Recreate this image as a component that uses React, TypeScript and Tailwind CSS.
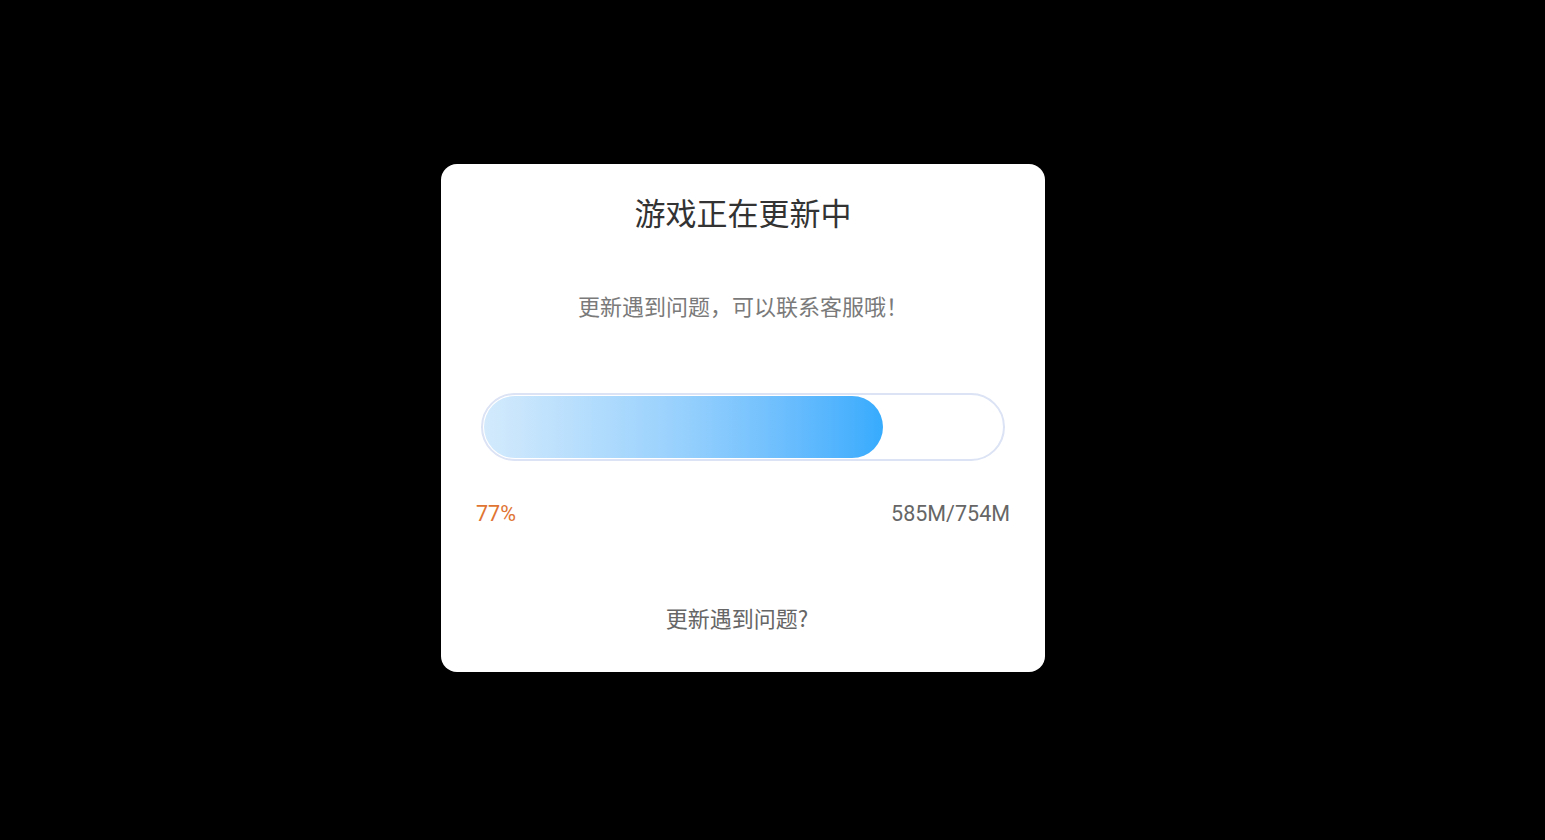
import React from 'react';

const percent = 77;

const UpdateDialog: React.FC = () => {
  return (
    <div className="w-[604px] h-[508px] bg-white rounded-2xl flex flex-col items-stretch pt-[28px] pb-[38px]">
      {/* 标题 */}
      <div className="h-[40px] leading-[40px] text-center text-[31px] text-[#333333]">
        游戏正在更新中
      </div>

      {/* 提示 */}
      <div className="mt-[58px] h-[30px] leading-[30px] text-center text-[22px] text-[#7a7a7a]">
        更新遇到问题，可以联系客服哦！
      </div>

      {/* 进度条 */}
      <div className="mt-[73px] mx-[40px] h-[68px] rounded-full border-2 border-[#dbe3f4] p-[1px] flex">
        <div
          className="h-full rounded-full bg-gradient-to-r from-[#d3eafc] via-[#96d0fd] to-[#36abfd]"
          style={{ width: `${percent}%` }}
        />
      </div>

      {/* 进度信息 */}
      <div className="mt-[38px] mx-[35px] h-[30px] leading-[30px] flex justify-between text-[21.5px] font-['Roboto','Noto_Sans_CJK_SC',sans-serif]">
        <span className="text-[#e07432]">{percent}%</span>
        <span className="text-[#666666]">585M/754M</span>
      </div>

      {/* 底部链接 */}
      <div className="mt-[73px] h-[30px] leading-[30px] text-center text-[22px] text-[#666666] pr-[12px]">
        更新遇到问题?
      </div>
    </div>
  );
};

export default function App() {
  return (
    <div className="w-[1545px] h-[840px] bg-black pl-[441px] pt-[164px] font-['Noto_Sans_CJK_SC','Noto_Sans',sans-serif]">
      <UpdateDialog />
    </div>
  );
}
